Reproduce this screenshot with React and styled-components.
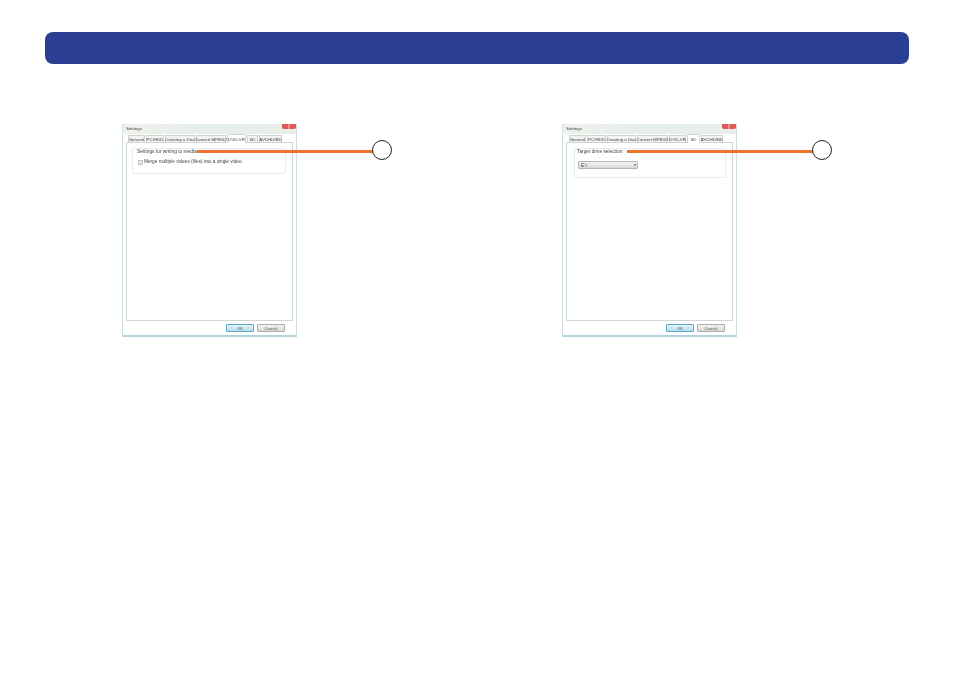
import React from "react";
import styled, { createGlobalStyle } from "styled-components";

const Global = createGlobalStyle`
  html, body { margin: 0; background: #fff; }
  body { font-family: "Liberation Sans", Arial, sans-serif; }
`;
const Page = styled.div`
  width: 954px; height: 673px; box-sizing: border-box; padding: 32px 45px 0; overflow: hidden;
`;
const Banner = styled.div`
  height: 32px; background: #2a3f92; border-radius: 8px;
`;
const Columns = styled.div`
  display: flex; margin: 60px 0 0 77px; gap: 265px;
`;
const Figure = styled.div`
  position: relative; width: 175px; height: 213px;
`;
const Dialog = styled.div`
  width: 175px; height: 213px; box-sizing: border-box;
  display: flex; flex-direction: column;
  background: #fff; border: 1px solid #cfe0e2; border-top: 0; border-bottom: 2px solid #b5d5de;
  padding: 0 3px 3px; color: #333;
  filter: blur(0.4px);
`;
const TitleBar = styled.div`
  height: 10px; flex: none; display: flex; align-items: flex-start; justify-content: space-between;
  background: linear-gradient(90deg, #eef1ea, #e6eeea 50%, #e9efea);
  margin: 0 -3px; padding: 0 0 0 3px;
  font-size: 4.4px; line-height: 9px; color: #444;
`;
const Close = styled.div`
  width: 14px; height: 5px; background: linear-gradient(90deg, #dd5a58 40%, #f0b0ae 50%, #dd5a58 60%); border-radius: 0 0 2px 2px;
`;
const Tabs = styled.div`
  display: flex; height: 9px; flex: none; padding-left: ${p => p.$left}px; gap: 1px; align-items: flex-end;
  position: relative; z-index: 1; margin-bottom: -1px;
`;
const Tab = styled.div`
  width: ${p => p.$w}px; height: ${p => (p.$active ? 9 : 8)}px; box-sizing: border-box;
  display: flex; align-items: center; justify-content: center; white-space: nowrap;
  font-size: 4.4px; color: #444;
  background: ${p => (p.$active ? "#fff" : "#f3f3f3")};
  border: 1px solid #d0d3d5; border-bottom: ${p => (p.$active ? "none" : "1px solid #d0d3d5")};
`;
const Panel = styled.div`
  flex: 1; box-sizing: border-box; border: 1px solid #d2d5d8; padding: 5px 6px 0 6px;
`;
const Group = styled.div`
  box-sizing: border-box; width: ${p => p.$w}px; height: ${p => p.$h}px; margin-left: ${p => p.$ml}px;
  border: 1px solid #eaecec; border-radius: 2px; padding: 0 0 0 ${p => p.$pl}px;
`;
const GroupTitle = styled.div`
  font-size: ${p => p.$size}px; line-height: 6px; margin: 0 0 ${p => p.$gap}px ${p => p.$x}px; color: #444; white-space: nowrap;
`;
const CheckRow = styled.div`
  display: flex; align-items: center; gap: 1px; font-size: 4.72px; line-height: 6px; color: #444; white-space: nowrap;
`;
const Check = styled.div`
  width: 3px; height: 3px; border: 1px solid #c4c4c4; background: #e9e9e9;
`;
const Select = styled.div`
  width: 60px; height: 8px; box-sizing: border-box; border: 1px solid #b5b5b5; border-radius: 1px;
  background: linear-gradient(#f3f3f3, #d8d8d8);
  display: flex; align-items: center; justify-content: space-between; padding: 0 1px 0 2px;
  font-size: 4.8px; color: #444;
`;
const Caret = styled.span`
  width: 0; height: 0; border: 1.5px solid transparent; border-top: 2px solid #444; border-bottom: 0;
`;
const Footer = styled.div`
  height: 11px; flex: none; display: flex; justify-content: flex-end; align-items: flex-end; gap: 3px; padding: 0 8px 0 0;
`;
const Button = styled.div`
  width: 28px; height: 8px; box-sizing: border-box; display: flex; align-items: center; justify-content: center;
  font-size: 4.2px; color: #555; border-radius: 1px;
  border: 1px solid ${p => (p.$primary ? "#5aa9cb" : "#adadad")};
  background: ${p => (p.$primary ? "linear-gradient(#e4f3fa, #b9dfee)" : "linear-gradient(#f2f2f2, #d9d9d9)")};
`;
const Callout = styled.div`
  position: absolute; top: 16px; left: ${p => p.$x}px; display: flex; align-items: flex-start;
`;
const Leader = styled.div`
  width: ${p => p.$w}px; height: 3px; margin-top: 10px; background: #f0722b;
`;
const Marker = styled.div`
  width: 20px; height: 20px; box-sizing: border-box; border: 1px solid #222; border-radius: 50%;
  background: #fff; margin-left: -1px;
`;

const tabNames = ["General", "PC/HDD", "Creating a Disc", "Convert MPEG2", "DVD-VR", "SD", "AVCHD/BD"];

function SettingsWindow({ widths, left, active, children }) {
  return (
    <Dialog>
      <TitleBar>Settings<Close /></TitleBar>
      <Tabs $left={left}>
        {tabNames.map((t, i) => <Tab key={t} $w={widths[i]} $active={i === active}>{t}</Tab>)}
      </Tabs>
      <Panel>{children}</Panel>
      <Footer>
        <Button $primary>OK</Button>
        <Button>Cancel</Button>
      </Footer>
    </Dialog>
  );
}

export default function App() {
  return (
    <Page>
      <Global />
      <Banner />
      <Columns>
        <Figure>
          <SettingsWindow widths={[17, 18, 30, 30, 19, 11, 23]} left={2} active={4}>
            <Group $w={154} $h={26} $ml={-1} $pl={5}>
              <GroupTitle $size={4.85} $x={-1} $gap={4}>Settings for writing to media</GroupTitle>
              <CheckRow><Check />Merge multiple videos (files) into a single video.</CheckRow>
            </Group>
          </SettingsWindow>
          <Callout $x={75}>
            <Leader $w={176} />
            <Marker />
          </Callout>
        </Figure>
        <Figure>
          <SettingsWindow widths={[17, 19, 29, 31, 17, 13, 22]} left={3} active={5}>
            <Group $w={152} $h={30} $ml={1} $pl={3}>
              <GroupTitle $size={4.8} $x={-1} $gap={6}>Target drive selection</GroupTitle>
              <Select>E:\<Caret /></Select>
            </Group>
          </SettingsWindow>
          <Callout $x={65}>
            <Leader $w={186} />
            <Marker />
          </Callout>
        </Figure>
      </Columns>
    </Page>
  );
}
